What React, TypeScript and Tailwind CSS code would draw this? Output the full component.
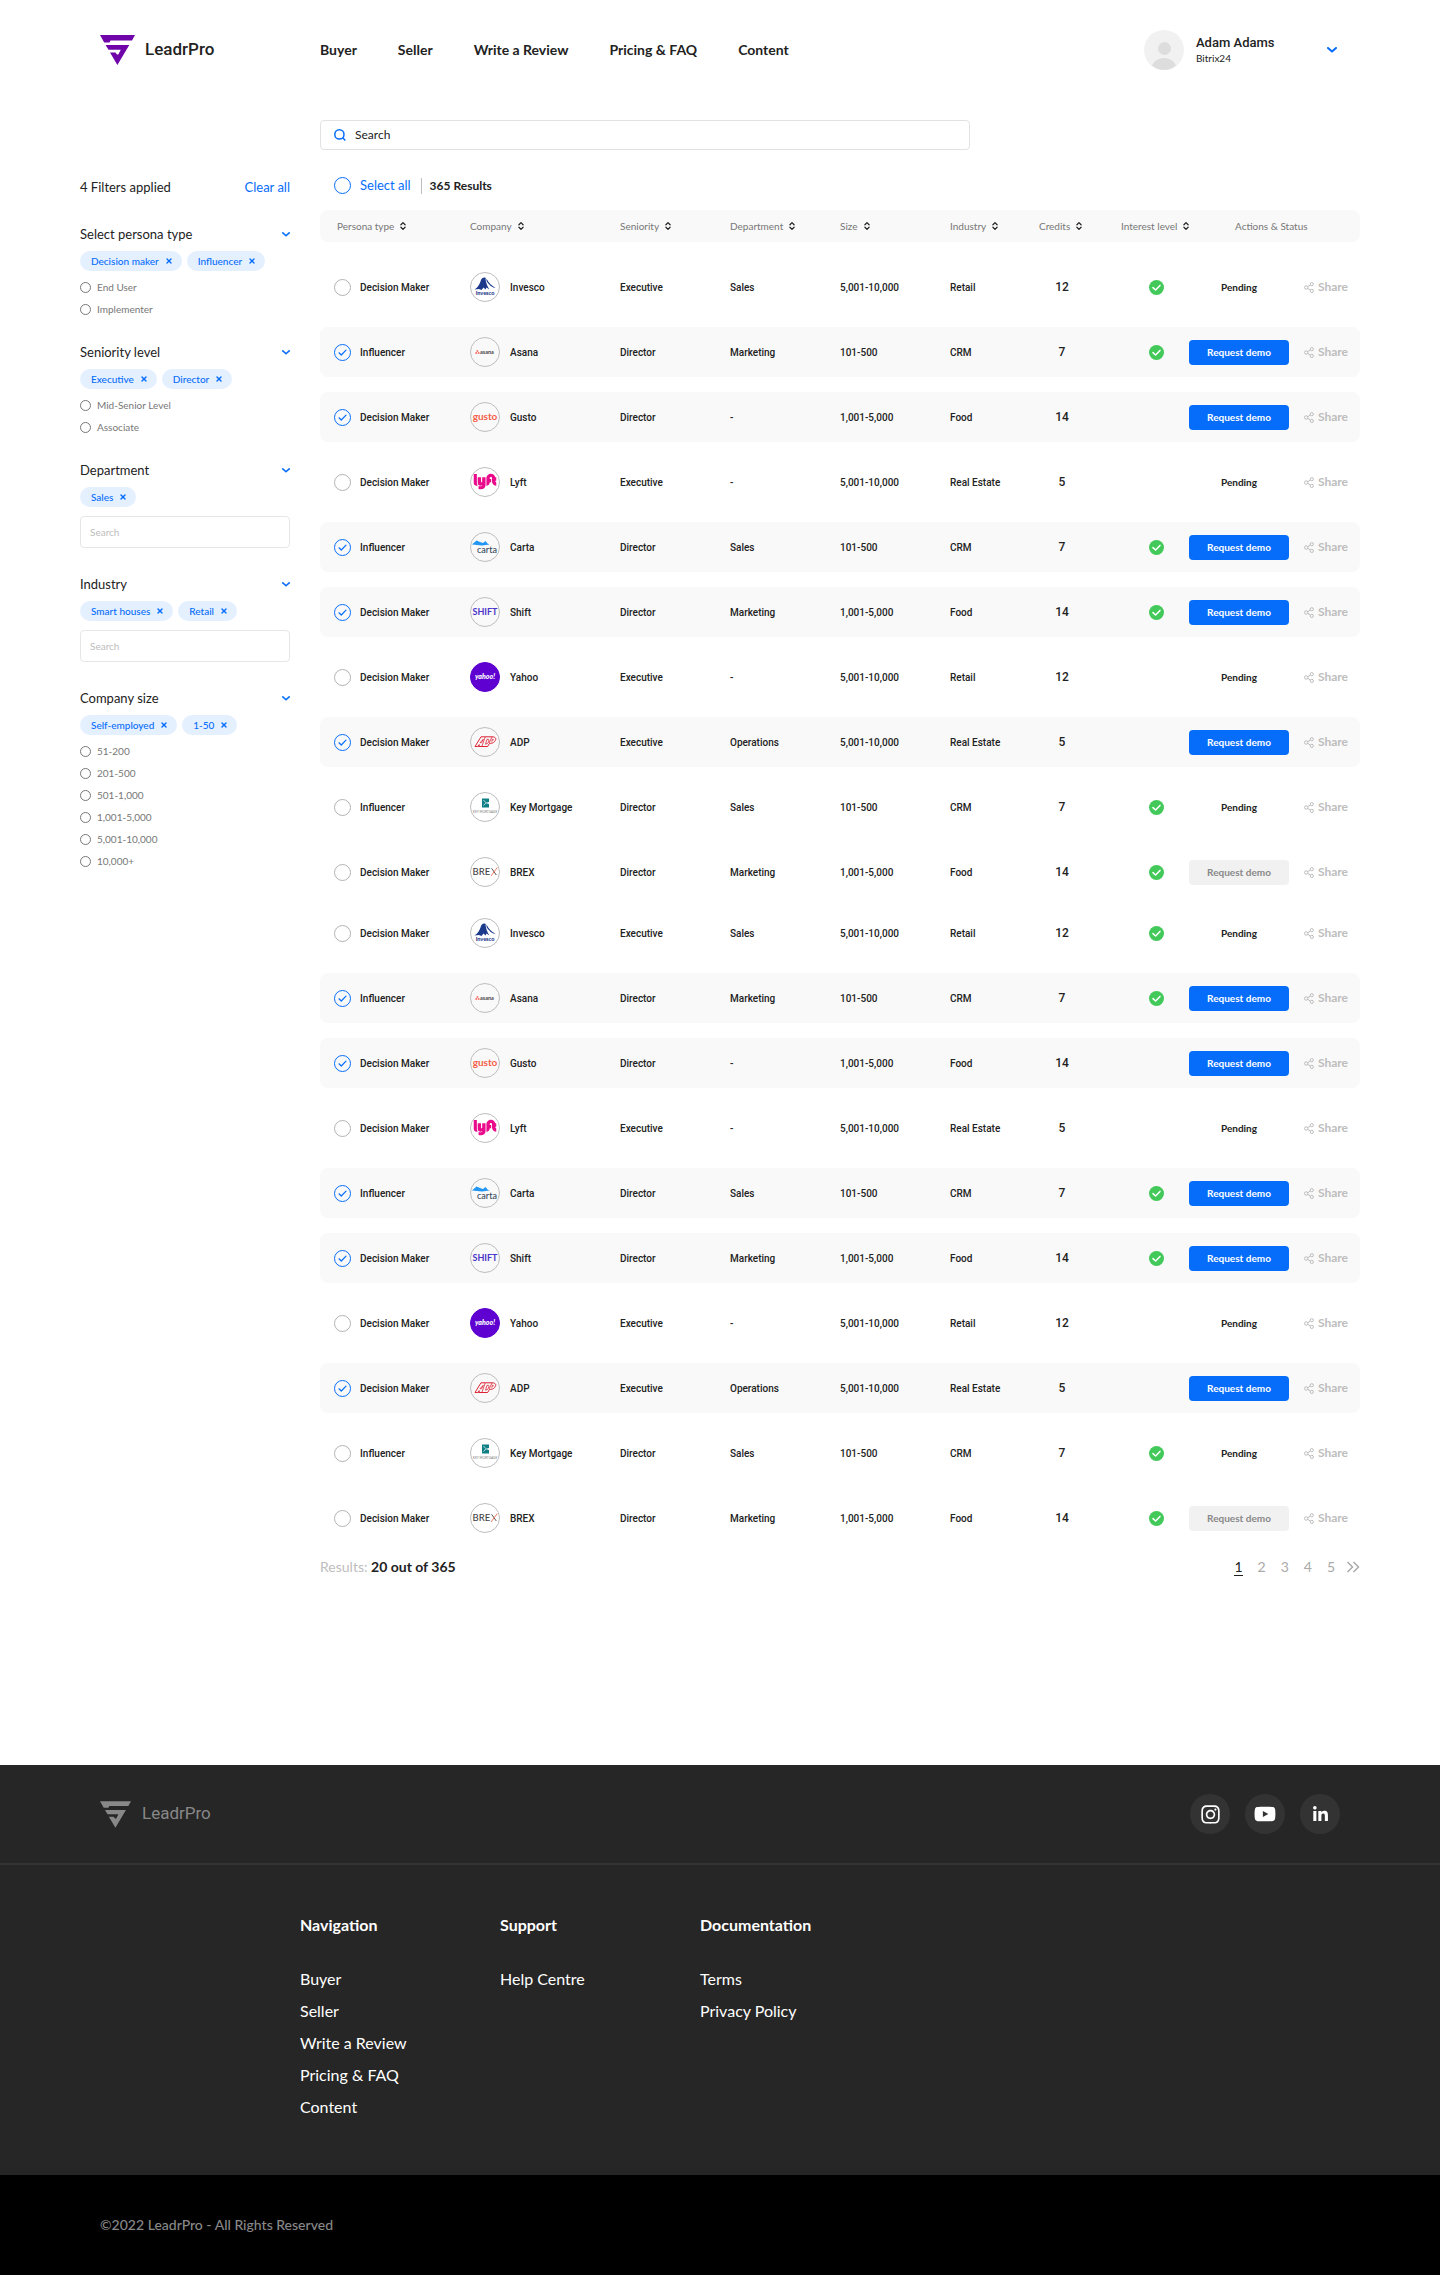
import { ReactNode } from "react";
import { ChevronsUpDown, X } from "lucide-react";
import { FaYoutube, FaInstagram, FaLinkedinIn } from "react-icons/fa6";
import { SiLyft } from "react-icons/si";

const din = "font-['Roboto',sans-serif]";

function LogoMark({ className }: { className: string }) {
  return (
    <svg viewBox="0 0 35 30" className={className} fill="currentColor" aria-hidden="true">
      <path d="M0 0H35L32 5.500H10.500L9.500 7.500H4.200Z" />
      <path d="M5.600 10H29.300L17.400 30L10 17.500H15.400L17 19.600H18.300L20.800 14.800H8.500Z" />
    </svg>
  );
}

function Chevron({ className }: { className: string }) {
  return (
    <svg viewBox="0 0 10 6" className={className} fill="none" stroke="#066dfb" strokeWidth="2" aria-hidden="true">
      <path d="M1 1L5 4.600L9 1" strokeLinecap="round" strokeLinejoin="round" />
    </svg>
  );
}

type Brand = "Invesco" | "Asana" | "Gusto" | "Lyft" | "Carta" | "Shift" | "Yahoo" | "ADP" | "Key Mortgage" | "BREX";

const brandArt: Record<Brand, ReactNode> = {
  Invesco: (
    <>
      <path d="M4.500 17.500C7.500 16 9.500 12.500 10.500 9.500C11 7 12.500 5.500 14.500 5.500C15.500 5.500 16 6 15.600 7.500C16 11 17.500 14.500 19.500 17.500L16.500 15.500L15.500 17.500L13.500 15.500L11.500 18L9 17Z" fill="#1b3a8c" />
      <path d="M16.500 6.500C18.500 11 21.500 13.500 25.500 16C22 15.500 18.500 12.500 16.500 9Z" fill="#1b3a8c" />
      <text x="15" y="22.500" fontSize="5.500" fontWeight="900" textAnchor="middle" fill="#1b3a8c">Invesco</text>
    </>
  ),
  Asana: (
    <>
      <g fill="#f4736b">
        <circle cx="7.400" cy="14.100" r="1" />
        <circle cx="6.200" cy="16.100" r="1" />
        <circle cx="8.600" cy="16.100" r="1" />
      </g>
      <text x="10" y="16.600" fontSize="5.500" fontWeight="700" fill="#444">asana</text>
    </>
  ),
  Gusto: <text x="15" y="17.500" fontSize="10" fontWeight="700" textAnchor="middle" fill="#f45d48">gusto</text>,
  Lyft: <SiLyft x="3.500" y="3" size={23} color="#ea0b8c" />,
  Carta: (
    <>
      <path d="M2 12.500L6.500 8.500L10 10L13 11L15.500 9L17.500 11.500L19.500 12.500L12 13.500Z" fill="#2196f3" />
      <text x="17" y="21" fontSize="9" textAnchor="middle" fill="#33475b">carta</text>
    </>
  ),
  Shift: <text x="15" y="17.500" fontSize="9" fontWeight="700" textAnchor="middle" fill="#4a35c8">SHIFT</text>,
  Yahoo: <text x="15" y="17" fontSize="7" fontWeight="900" fontStyle="italic" textAnchor="middle" fill="#fff">yahoo!</text>,
  ADP: (
    <g fill="none" stroke="#dc2436" strokeLinejoin="round">
      <path d="M5 19.500L11 9.800H22C25.500 9.800 26.500 11.500 25.300 13.500C24.300 15.300 22.800 16.300 20.800 16.300H19.600L17.600 19.500H8.500L9.500 17.800H8.800L7.800 19.500Z" />
      <path d="M10 15.700H11.500L13.300 12.200ZM15.200 10L12 19M17 12.300H18.200C19.500 12.300 19 14.500 17.500 16.500L15.500 17.200ZM22 10L19 16M21.800 12.300H23.200C23.500 13.500 22.500 14.100 21 14.100" strokeWidth="0.800" />
    </g>
  ),
  "Key Mortgage": (
    <>
      <path d="M12 6.500H19V10L15.500 11L19 12V15.500H12Z" fill="#0f7f86" />
      <path d="M13.500 8L16 10.800L13.500 13.500" stroke="#fff" strokeWidth="0.700" fill="none" />
      <text x="15" y="20.500" fontSize="3.200" textAnchor="middle" fill="#888">KEY MORTGAGE</text>
    </>
  ),
  BREX: (
    <>
      <text x="2.500" y="18" fontSize="9.500" fontWeight="500" fill="#444">BRE</text>
      <path d="M21.600 11.300L26.300 18" stroke="#444" strokeWidth="0.900" />
      <path d="M27.300 10.500L21 19" stroke="#f26b4d" strokeWidth="0.900" />
    </>
  ),
};

function BrandLogo({ name }: { name: Brand }) {
  const yahoo = name === "Yahoo";
  return (
    <svg viewBox="0 0 30 30" className="size-[30px] shrink-0" role="img" aria-label={name + " logo"} fontFamily="Lato, sans-serif">
      <circle cx="15" cy="15" r="14.500" fill={yahoo ? "#5f01d1" : "none"} stroke={yahoo ? "#5f01d1" : "#bdbdbd"} />
      {brandArt[name]}
    </svg>
  );
}

type Row = {
  persona: string;
  company: Brand;
  seniority: string;
  department: string;
  size: string;
  industry: string;
  credits: number;
  interest: boolean;
  status: "pending" | "request" | "disabled";
};

const rows: Row[] = [
  { persona: "Decision Maker", company: "Invesco", seniority: "Executive", department: "Sales", size: "5,001-10,000", industry: "Retail", credits: 12, interest: true, status: "pending" },
  { persona: "Influencer", company: "Asana", seniority: "Director", department: "Marketing", size: "101-500", industry: "CRM", credits: 7, interest: true, status: "request" },
  { persona: "Decision Maker", company: "Gusto", seniority: "Director", department: "-", size: "1,001-5,000", industry: "Food", credits: 14, interest: false, status: "request" },
  { persona: "Decision Maker", company: "Lyft", seniority: "Executive", department: "-", size: "5,001-10,000", industry: "Real Estate", credits: 5, interest: false, status: "pending" },
  { persona: "Influencer", company: "Carta", seniority: "Director", department: "Sales", size: "101-500", industry: "CRM", credits: 7, interest: true, status: "request" },
  { persona: "Decision Maker", company: "Shift", seniority: "Director", department: "Marketing", size: "1,001-5,000", industry: "Food", credits: 14, interest: true, status: "request" },
  { persona: "Decision Maker", company: "Yahoo", seniority: "Executive", department: "-", size: "5,001-10,000", industry: "Retail", credits: 12, interest: false, status: "pending" },
  { persona: "Decision Maker", company: "ADP", seniority: "Executive", department: "Operations", size: "5,001-10,000", industry: "Real Estate", credits: 5, interest: false, status: "request" },
  { persona: "Influencer", company: "Key Mortgage", seniority: "Director", department: "Sales", size: "101-500", industry: "CRM", credits: 7, interest: true, status: "pending" },
  { persona: "Decision Maker", company: "BREX", seniority: "Director", department: "Marketing", size: "1,001-5,000", industry: "Food", credits: 14, interest: true, status: "disabled" },
];

function ShareIcon() {
  return (
    <svg viewBox="0 0 10 11" className="h-[11px] w-[10px]" fill="none" stroke="currentColor" aria-hidden="true">
      <circle cx="2.200" cy="5.500" r="1.700" />
      <circle cx="7.800" cy="2.200" r="1.600" />
      <circle cx="7.800" cy="8.900" r="1.600" />
      <path d="M3.700 4.700L6.300 3.100M3.700 6.300L6.300 8" />
    </svg>
  );
}

function GreenCheck() {
  return (
    <svg viewBox="0 0 15 15" className="size-[15px]" role="img" aria-label="High interest">
      <circle cx="7.500" cy="7.500" r="7.500" fill="#43c95a" />
      <path d="M4 7.600L6.600 10L11 5.400" fill="none" stroke="#fff" strokeWidth="1.500" strokeLinecap="round" strokeLinejoin="round" />
    </svg>
  );
}

function Cell({ on, className = "", children }: { on: boolean; className?: string; children?: ReactNode }) {
  return (
    <td className="p-0 pb-[15px] group-last:pb-[11px]">
      <div className={"flex h-[50px] items-center whitespace-nowrap " + (on ? "bg-[#f9f9f9] " : "") + className}>{children}</div>
    </td>
  );
}

function ResultRow({ row }: { row: Row }) {
  const on = row.status === "request";
  return (
    <tr className="group">
      <Cell on={on} className="rounded-l-lg pl-[14px]">
        <label className="flex items-center gap-[9px]">
          <span className="grid place-items-center">
            <input
              type="checkbox"
              defaultChecked={on}
              className="peer col-start-1 row-start-1 size-[17px] appearance-none rounded-full border border-[#b3b3b3] checked:border-[#066dfb]"
            />
            <svg viewBox="0 0 9 7" className="pointer-events-none invisible col-start-1 row-start-1 h-[7px] w-[9px] peer-checked:visible" fill="none" stroke="#066dfb" strokeWidth="1.200" strokeLinecap="round" strokeLinejoin="round" aria-hidden="true">
              <path d="M1 3.800L3.300 6L8 1.200" />
            </svg>
          </span>
          {row.persona}
        </label>
      </Cell>
      <Cell on={on} className="gap-[10px]">
        <BrandLogo name={row.company} />
        {row.company}
      </Cell>
      <Cell on={on}>{row.seniority}</Cell>
      <Cell on={on}>{row.department}</Cell>
      <Cell on={on}>{row.size}</Cell>
      <Cell on={on}>{row.industry}</Cell>
      <Cell on={on}>
        <span className="w-[46px] text-center text-xs font-medium">{row.credits}</span>
      </Cell>
      <Cell on={on} className="pl-7">{row.interest && <GreenCheck />}</Cell>
      <Cell on={on} className="justify-between rounded-r-lg pr-3 font-['Lato',sans-serif]">
        {row.status === "pending" && <span className="w-[100px] text-center font-bold">Pending</span>}
        {row.status === "request" && (
          <button type="button" className="h-[25px] w-[100px] rounded-[4px] bg-[#066dfb] font-bold text-white">Request demo</button>
        )}
        {row.status === "disabled" && (
          <button type="button" disabled className="h-[25px] w-[100px] rounded-[4px] bg-[#f1f1f1] font-bold text-[#888]">Request demo</button>
        )}
        <button type="button" className="flex items-center gap-1 text-xs font-bold text-[#bdbdbd]">
          <ShareIcon />
          Share
        </button>
      </Cell>
    </tr>
  );
}

const columns = [
  { label: "Persona type", width: "w-[150px]", pad: "rounded-l-lg pl-[17px]" },
  { label: "Company", width: "w-[150px]", pad: "" },
  { label: "Seniority", width: "w-[110px]", pad: "" },
  { label: "Department", width: "w-[110px]", pad: "" },
  { label: "Size", width: "w-[110px]", pad: "" },
  { label: "Industry", width: "w-[89px]", pad: "" },
  { label: "Credits", width: "w-[82px]", pad: "" },
  { label: "Interest level", width: "w-[68px]", pad: "" },
];

function ResultsTable() {
  return (
    <table className={"mt-4 w-full table-fixed border-separate border-spacing-0 text-left text-[10px] font-medium text-[#222] " + din}>
      <thead>
        <tr className="font-['Lato',sans-serif]">
          {columns.map((c) => (
            <th key={c.label} scope="col" className={c.width + " p-0 pb-5 font-normal"}>
              <div className={"flex h-8 items-center bg-[#f9f9f9] " + c.pad}>
                <button type="button" className="flex shrink-0 items-center gap-1 whitespace-nowrap text-[#777]">
                  {c.label}
                  <ChevronsUpDown className="size-[10px] text-[#222]" strokeWidth={3} aria-hidden="true" />
                </button>
              </div>
            </th>
          ))}
          <th scope="col" className="p-0 pb-5 font-normal">
            <div className="flex h-8 items-center rounded-r-lg bg-[#f9f9f9] pl-[46px] text-[#777]">Actions &amp; Status</div>
          </th>
        </tr>
      </thead>
      {[0, 1].map((page) => (
        <tbody key={page}>
          {rows.map((r) => (
            <ResultRow key={r.company} row={r} />
          ))}
        </tbody>
      ))}
    </table>
  );
}

type Filter = { title: string; chips: string[]; options?: string[] };

const filters: Filter[] = [
  { title: "Select persona type", chips: ["Decision maker", "Influencer"], options: ["End User", "Implementer"] },
  { title: "Seniority level", chips: ["Executive", "Director"], options: ["Mid-Senior Level", "Associate"] },
  { title: "Department", chips: ["Sales"] },
  { title: "Industry", chips: ["Smart houses", "Retail"] },
  { title: "Company size", chips: ["Self-employed", "1-50"], options: ["51-200", "201-500", "501-1,000", "1,001-5,000", "5,001-10,000", "10,000+"] },
];

function FilterSection({ filter }: { filter: Filter }) {
  return (
    <section className={filter.options ? "pb-6" : "pb-7"}>
      <h2>
        <button type="button" className="flex w-full items-center justify-between text-[13px] leading-4 text-[#222]">
          {filter.title}
          <Chevron className="h-[5px] w-2" />
        </button>
      </h2>
      <div className="mt-[9px] flex gap-[5px]">
        {filter.chips.map((chip) => (
          <span key={chip} className="flex h-5 items-center gap-[6px] rounded-full bg-[#e5f0ff] pr-[9px] pl-[11px] text-[10px] font-medium whitespace-nowrap text-[#066dfb]">
            {chip}
            <button type="button" aria-label={"Remove " + chip}>
              <X className="size-[8px]" strokeWidth={4} />
            </button>
          </span>
        ))}
      </div>
      {filter.options ? (
        <div className="mt-[5px]">
          {filter.options.map((option) => (
            <label key={option} className="flex h-[22px] items-center gap-[6px] text-[10px] text-[#777]">
              <input type="radio" name={filter.title} className="size-[11px] appearance-none rounded-full border border-[#777] checked:border-4" />
              {option}
            </label>
          ))}
        </div>
      ) : (
        <input
          type="search"
          placeholder="Search"
          aria-label={"Search " + filter.title}
          className="mt-[9px] h-8 w-full rounded-[4px] border border-[#e6e6e6] px-[9px] text-[10px] placeholder:text-[#bdbdbd]"
        />
      )}
    </section>
  );
}

const navLinks = ["Buyer", "Seller", "Write a Review", "Pricing & FAQ", "Content"];

const footerGroups = [
  { title: "Navigation", links: navLinks },
  { title: "Support", links: ["Help Centre"] },
  { title: "Documentation", links: ["Terms", "Privacy Policy"] },
];

const socials = [
  { name: "Instagram", icon: <FaInstagram className="size-[21px]" /> },
  { name: "YouTube", icon: <FaYoutube className="size-[22px]" /> },
  { name: "LinkedIn", icon: <FaLinkedinIn className="size-[17px]" /> },
];

export default function App() {
  return (
    <div className="bg-white font-['Lato',sans-serif] text-[#222]">
      <header className="flex h-[100px] items-center px-[100px]">
        <a href="#home" className={"flex w-[220px] shrink-0 items-center gap-[10px] text-[17px] font-medium " + din}>
          <LogoMark className="h-[30px] w-[35px] text-[#6f04a8]" />
          LeadrPro
        </a>
        <nav className="flex gap-[41px] text-sm font-bold">
          {navLinks.map((l) => (
            <a key={l} href="#nav">{l}</a>
          ))}
        </nav>
        <button type="button" aria-label="Account menu" className="ml-auto flex items-center text-left">
          <svg viewBox="0 0 40 40" className="size-10" aria-hidden="true">
            <circle cx="20" cy="20" r="20" fill="#f1f1f1" />
            <circle cx="20.500" cy="18.500" r="6.500" fill="#ddd" />
            <path d="M8 35.500C10 31 14.500 28 20 28C25.500 28 30 31 32 35.500C28.500 38.500 24.500 40 20 40C15.500 40 11.500 38.500 8 35.500Z" fill="#ddd" />
          </svg>
          <span className="ml-3 w-[131px]">
            <span className={"block text-[13px] leading-4 font-medium " + din}>Adam Adams</span>
            <span className="block text-[10px] leading-[14px]">Bitrix24</span>
          </span>
          <Chevron className="mr-[3px] h-[6px] w-[10px]" />
        </button>
      </header>

      <div className="flex gap-[30px] px-20 pt-5">
        <aside className="w-[210px] shrink-0 pt-[59px]">
          <div className="mb-[31px] flex justify-between text-[13px] leading-4">
            <span>4 Filters applied</span>
            <button type="button" className="text-[#066dfb]">Clear all</button>
          </div>
          {filters.map((f) => (
            <FilterSection key={f.title} filter={f} />
          ))}
        </aside>

        <main className="min-w-0 flex-1">
          <label className="flex h-[30px] max-w-[650px] items-center gap-[9px] rounded-[4px] border border-[#e2e2e2] px-[13px]">
            <svg viewBox="0 0 12 12" className="size-3 shrink-0" fill="none" stroke="#066dfb" strokeWidth="1.500" aria-hidden="true">
              <circle cx="5.400" cy="5.400" r="4.600" />
              <path d="M8.600 8.600L11.300 11.500" />
            </svg>
            <input type="search" placeholder="Search" aria-label="Search" className="w-full text-xs outline-none placeholder:text-[#222]" />
          </label>

          <div className="mt-[27px] flex h-[17px] items-center pl-[14px] text-xs">
            <label className="flex items-center gap-[9px] text-[13px] text-[#066dfb]">
              <input type="checkbox" className="size-[17px] appearance-none rounded-full border border-[#066dfb] checked:bg-[#066dfb]" />
              Select all
            </label>
            <span className="ml-[10px] h-4 border-l border-[#bdbdbd] pl-2 leading-4 font-bold">365 Results</span>
          </div>

          <ResultsTable />

          <div className="mt-[3px] flex h-[20px] items-center justify-between text-sm">
            <p className="text-[#bdbdbd]">
              Results: <span className="font-bold text-[#222]">20 out of 365</span>
            </p>
            <nav aria-label="Pagination" className="flex items-center gap-[15px] text-[#aaa]">
              <a href="#1" aria-current="page" className="border-b border-[#222] leading-4 text-[#222]">1</a>
              <a href="#2">2</a>
              <a href="#3">3</a>
              <a href="#4">4</a>
              <a href="#5">5</a>
              <a href="#next" aria-label="Last page" className="-ml-1">
                <svg viewBox="0 0 14 12" className="h-3 w-[14px]" fill="none" stroke="currentColor" strokeWidth="1.500" aria-hidden="true">
                  <path d="M1.500 1L6.500 6L1.500 11M7.500 1L12.500 6L7.500 11" />
                </svg>
              </a>
            </nav>
          </div>
        </main>
      </div>

      <footer className="mt-[188px] bg-[#262626] text-white">
        <div className="flex h-[100px] items-center justify-between border-b-2 border-[#333] px-[100px]">
          <a href="#home" className={"flex items-center gap-[11px] text-[17px] text-[#888] " + din}>
            <LogoMark className="h-[27px] w-[31px]" />
            LeadrPro
          </a>
          <div className="flex gap-[15px]">
            {socials.map((s) => (
              <a key={s.name} href="#social" aria-label={s.name} className="grid size-10 place-items-center rounded-full bg-[#333]">
                {s.icon}
              </a>
            ))}
          </div>
        </div>
        <div className="flex pt-12 pb-[52px] pl-[300px]">
          {footerGroups.map((g) => (
            <div key={g.title} className="w-[200px]">
              <h3 className="leading-6 font-bold">{g.title}</h3>
              <ul className="mt-[26px]">
                {g.links.map((l) => (
                  <li key={l} className="h-8 leading-8">
                    <a href="#footer">{l}</a>
                  </li>
                ))}
              </ul>
            </div>
          ))}
        </div>
        <div className="flex h-[100px] items-center bg-black px-[100px] text-sm font-medium text-[#888]">©2022 LeadrPro - All Rights Reserved</div>
      </footer>
    </div>
  );
}
